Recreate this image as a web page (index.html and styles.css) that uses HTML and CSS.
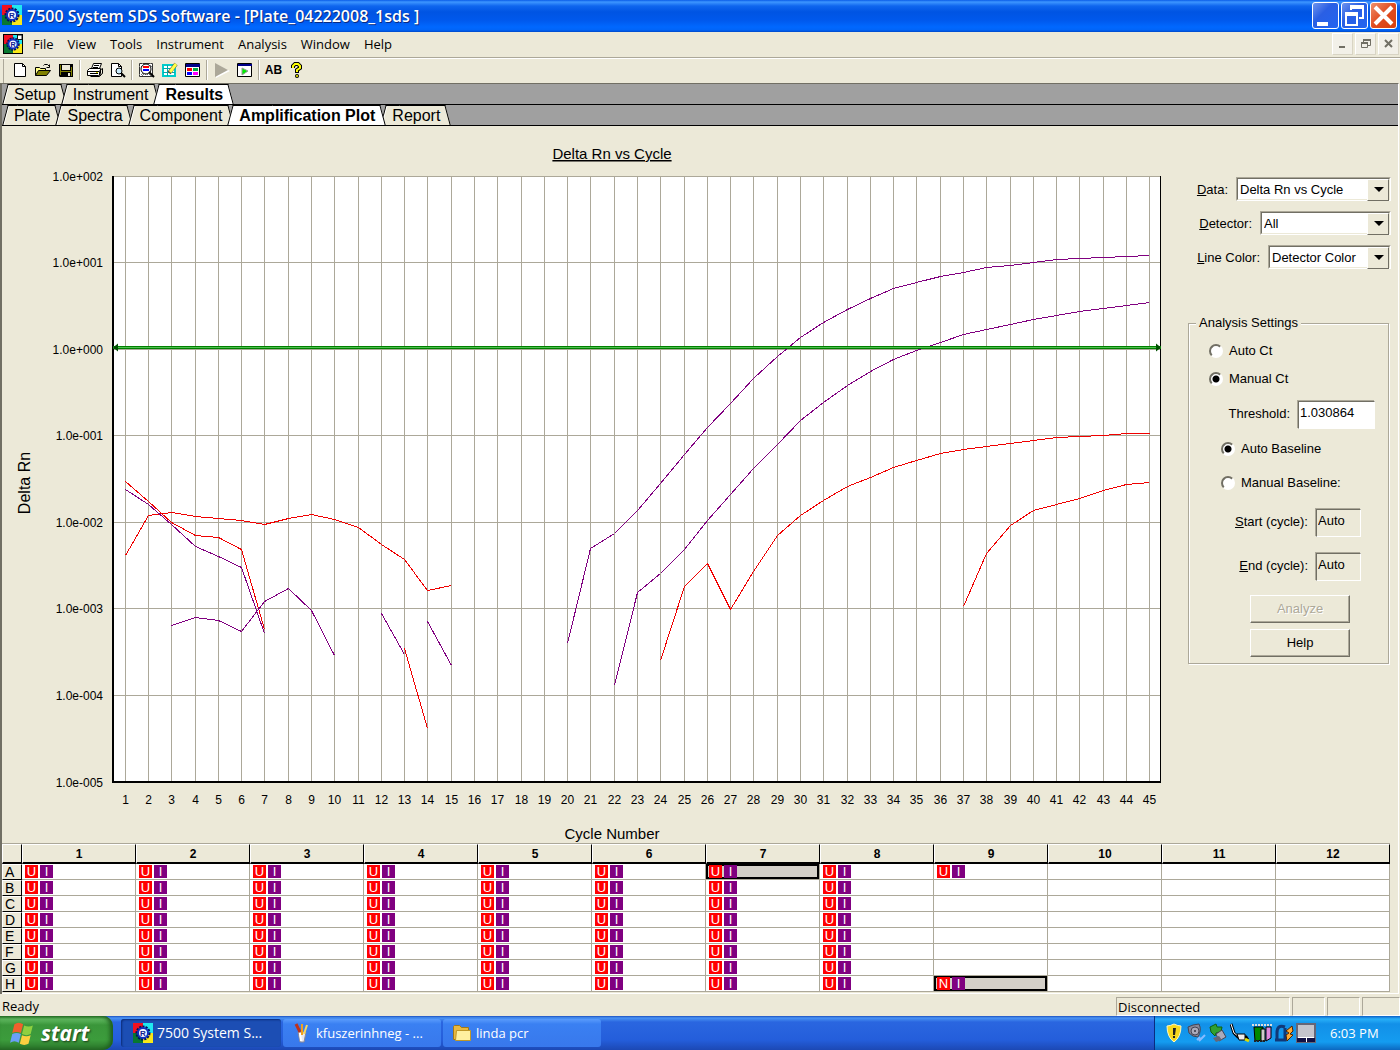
FILE: index.html
```html
<!DOCTYPE html>
<html lang="en">
<head>
<meta charset="utf-8">
<meta name="viewport" content="width=device-width, initial-scale=1">
<title>7500 System SDS Software - [Plate_04222008_1sds ]</title>
<link rel="stylesheet" href="styles.css">
</head>
<body>
<header class="titlebar">
  <svg class="icon20" viewBox="0 0 20 20" aria-hidden="true">
    <g id="logo">
      <path fill="#f01020" d="M0 0h10v10H0z"/><path fill="#20e8f0" d="M10 0h10v10H10z"/>
      <path fill="#087830" d="M0 10h10v10H0z"/><path fill="#f8e818" d="M10 10h10v10H10z"/>
      <circle cx="10" cy="10" r="6" fill="none" stroke="#001060" stroke-width="3" stroke-dasharray="2 1"/>
      <circle cx="10" cy="10" r="5" fill="#f4f8ff" stroke="#1030c0" stroke-width="2"/>
      <text x="10" y="13" text-anchor="middle" class="logo-r">R</text>
    </g>
  </svg>
  <h1>7500 System SDS Software - [Plate_04222008_1sds ]</h1>
  <div class="caption-buttons">
    <button type="button" aria-label="Minimize"><svg viewBox="0 0 25 25"><path fill="#fff" d="M4 19h11v4H4z"/></svg></button>
    <button type="button" aria-label="Restore"><svg viewBox="0 0 25 25"><path fill="none" stroke="#fff" stroke-width="2" d="M9 7V4h12v11h-4M4 12h11v10H4z"/><path stroke="#fff" stroke-width="4" d="M8 4h14M3 11h13"/></svg></button>
    <button type="button" class="close" aria-label="Close"><svg viewBox="0 0 25 25"><path stroke="#fff" stroke-width="4" d="M4 4l17 17M21 4L4 21"/></svg></button>
  </div>
</header>

<nav class="menubar">
  <svg class="icon20 doc" viewBox="0 0 20 20" aria-hidden="true"><use href="#logo"/><path fill="#fff" stroke="#000" d="M15 0v5h5V0z"/></svg>
  <button type="button">File</button><button type="button">View</button><button type="button">Tools</button><button type="button">Instrument</button><button type="button">Analysis</button><button type="button">Window</button><button type="button">Help</button>
  <div class="mdi-buttons">
    <button type="button" aria-label="Minimize document"><svg viewBox="0 0 20 20"><path fill="#716f64" d="M6 12h6v2H6z"/></svg></button>
    <button type="button" aria-label="Restore document"><svg viewBox="0 0 20 20"><path fill="none" stroke="#716f64" d="M7.500 8V6.500h7v5H12M5.500 9.500h6v4h-6z"/><path stroke="#716f64" stroke-width="2" d="M7 6h8M5 9h7"/></svg></button>
    <button type="button" aria-label="Close document"><svg viewBox="0 0 20 20"><path stroke="#716f64" stroke-width="2" d="M6 6l7 7M13 6l-7 7"/></svg></button>
  </div>
</nav>

<div class="toolbar">
  <button type="button" aria-label="New"><svg viewBox="0 0 16 16"><path fill="#fff" stroke="#000" d="M2.500 1.500h8l3 3v10h-11z"/><path fill="none" stroke="#000" d="M10.500 1.500v3h3"/></svg></button>
  <button type="button" aria-label="Open"><svg viewBox="0 0 16 16"><path fill="#ff8" stroke="#000" d="M.5 13.500v-8h4l1 1h5v2"/><path fill="#808000" stroke="#000" d="M.5 13.500l3-5h12l-4 5z"/><path fill="none" stroke="#000" d="M8.500 3.500l1-1h3l2 2m0-2v3h-3"/></svg></button>
  <button type="button" aria-label="Save"><svg viewBox="0 0 16 16"><path fill="#000" d="M1 2h14v13H2l-1-1z"/><path fill="#808000" d="M2 3h1v10H2zM13 5h1v9h-1zM3 9h10v1H3z"/><path fill="#ece9d8" d="M4 3h8v5H4zM10 11h2v3h-2z"/></svg></button>
  <span class="sep"></span>
  <button type="button" aria-label="Print"><svg viewBox="0 0 16 16"><path fill="#fff" stroke="#000" d="M4.500 6.500l2-5h8l-2 5M.5 8.500l2-2h11v5l-2 2H.5z"/><path fill="none" stroke="#000" d="M7 3.500h5M6 5.500h5M.5 9.500h12v4M12.500 8.500l3-2v5l-3 2M3 11.500h8M3.500 14.500h9l2-2"/><path fill="#dd0" d="M9 10h2v1H9z"/></svg></button>
  <button type="button" aria-label="Print preview"><svg viewBox="0 0 16 16"><path fill="#fff" stroke="#000" d="M1.500 1.500h7l3 3v10h-10z"/><path stroke="#000" fill="none" d="M8.500 1.500v3h3"/><circle cx="9" cy="9" r="3" fill="#cef" stroke="#000"/><path stroke="#000" stroke-width="2" d="M11 11l4 4"/></svg></button>
  <span class="sep"></span>
  <button type="button" aria-label="Zoom plate"><svg viewBox="0 0 16 16"><path fill="#fff" stroke="#333" d="M.5 1.500h13v13H.5z"/><path stroke="#777" stroke-dasharray="1 1" d="M0 4.500h14M0 12.500h14M3.500 1v14M11.500 1v14"/><circle cx="7" cy="7" r="5" fill="#fff" stroke="#000"/><path fill="#f00" d="M4 4h6v2H4z"/><path fill="#00f" d="M4 7h6v2H4z"/><path stroke="#000" stroke-width="2" d="M10 10l5 5"/></svg></button>
  <button type="button" aria-label="Edit well"><svg viewBox="0 0 16 16"><path fill="#fff" stroke="#0cc" stroke-width="2" d="M1 3h12v11H1z"/><path stroke="#0aa" d="M1 6.500h12M1 10.500h12M5.500 3v11"/><path stroke="#555" stroke-width="4" d="M7 11l7-9"/><path stroke="#ff4" stroke-width="3" d="M8 10l6-8"/></svg></button>
  <button type="button" aria-label="Plate view"><svg viewBox="0 0 16 16"><path fill="#fff" stroke="#000" d="M.5 1.500h14v13H.5z"/><path fill="#008" d="M1 2h14v3H1z"/><path fill="#f00" d="M2 6h5v3H2z"/><path fill="#00f" d="M2 10h5v3H2z"/><path fill="#0a4" d="M8 6h5v3H8z"/><path fill="#f0f" d="M8 10h5v3H8z"/></svg></button>
  <span class="sep"></span>
  <button type="button" aria-label="Run" disabled><svg viewBox="0 0 16 16"><path fill="#fff" d="M2 2v14l14-7z"/><path fill="#aca899" d="M1 1v14l13-7z"/></svg></button>
  <button type="button" aria-label="Analyze plate"><svg viewBox="0 0 16 16"><path fill="#fff" stroke="#000" d="M.5 1.500h14v13H.5z"/><path fill="#008" d="M1 2h14v2H1z"/><path fill="#0e0" stroke="#999" d="M5 6v7l6-4z"/></svg></button>
  <span class="sep"></span>
  <button type="button" class="ab" aria-label="Well labels">AB</button>
  <button type="button" aria-label="Help"><svg viewBox="0 0 16 16"><path fill="none" stroke="#000" stroke-width="4" d="M4 6V4l2-2h3l2 2v2L8 8v3"/><path fill="none" stroke="#ff0" stroke-width="2" d="M4 6V4l2-2h3l2 2v2L8 8v2"/><circle cx="8" cy="14" r="2" fill="#000"/><circle cx="8" cy="14" r="1" fill="#ff0"/></svg></button>
</div>

<main class="window">
  <div class="tabs" role="tablist">
    <button type="button" role="tab" class="tab">Setup</button><button type="button" role="tab" class="tab">Instrument</button><button type="button" role="tab" class="tab active" aria-selected="true">Results</button>
  </div>
  <div class="tabs" role="tablist">
    <button type="button" role="tab" class="tab">Plate</button><button type="button" role="tab" class="tab">Spectra</button><button type="button" role="tab" class="tab">Component</button><button type="button" role="tab" class="tab active" aria-selected="true">Amplification Plot</button><button type="button" role="tab" class="tab">Report</button>
  </div>

  <div class="content">
    <section class="chart"><svg id="plot" role="img" aria-label="Delta Rn vs Cycle"></svg></section>

    <form class="panel">
      <div class="combo-row"><label for="data"><u>D</u>ata:</label><span class="combo combo-l"><select id="data"><option>Delta Rn vs Cycle</option><option>Rn vs Cycle</option></select></span></div>
      <div class="combo-row"><label for="detector"><u>D</u>etector:</label><span class="combo combo-m"><select id="detector"><option>All</option></select></span></div>
      <div class="combo-row"><label for="color"><u>L</u>ine Color:</label><span class="combo combo-s"><select id="color"><option>Detector Color</option><option>Well Color</option></select></span></div>

      <fieldset>
        <legend>Analysis Settings</legend>
        <label class="radio"><input type="radio" name="ct">Auto Ct</label>
        <label class="radio"><input type="radio" name="ct" checked>Manual Ct</label>
        <div class="field threshold"><label for="threshold">Threshold:</label><input id="threshold" type="text" value="1.030864"></div>
        <label class="radio inner"><input type="radio" name="baseline" checked>Auto Baseline</label>
        <label class="radio inner"><input type="radio" name="baseline">Manual Baseline:</label>
        <div class="field cycle"><label for="start"><u>S</u>tart (cycle):</label><input id="start" type="text" value="Auto" readonly></div>
        <div class="field cycle"><label for="end"><u>E</u>nd (cycle):</label><input id="end" type="text" value="Auto" readonly></div>
        <div class="actions"><button type="button" disabled>Analyze</button><button type="button">Help</button></div>
      </fieldset>
    </form>
  </div>

  <div class="plate-wrap"><table class="plate" id="plate"></table></div>
</main>

<footer class="statusbar">
  <span class="ready">Ready</span>
  <span class="pane pane-main">Disconnected</span><span class="pane"></span><span class="pane"></span><span class="pane"></span>
</footer>

<nav class="taskbar">
  <button type="button" class="start">
    <svg viewBox="0 0 24 24"><path fill="#f0602c" d="M5 4q4-3 8 0l-2 8q-4-2-8 0z"/><path fill="#8fd040" d="M14 5q4 2 8 0l-2 8q-4 2-8 0z"/><path fill="#6aa0f8" d="M3 13q4-2 8 0l-2 8q-4-3-8 0z"/><path fill="#fcd040" d="M12 14q4 2 8 0l-2 8q-4 2-8 0z"/></svg>
    start</button>
  <div class="tasks">
    <button type="button" class="task current"><svg viewBox="0 0 20 20"><use href="#logo"/></svg>7500 System S...</button>
    <button type="button" class="task"><svg viewBox="0 0 20 20"><path fill="#e8e8f0" stroke="#889" d="M6 9h8l-2 10H8z"/><path stroke="#fff" stroke-width="2" d="M8 10l1 8"/><path stroke="#c03018" stroke-width="3" d="M8 9L4 1"/><path stroke="#f0a020" stroke-width="2" d="M10 12V1"/><path stroke="#f8d860" stroke-width="2" d="M12 11l3-9"/></svg>kfuszerinhneg - ...</button>
    <button type="button" class="task"><svg viewBox="0 0 20 20"><path fill="#e8b840" stroke="#a07818" d="M1.500 3.500l1-1h5l2 2h7v12h-15z"/><path fill="#fff0a0" stroke="#c09828" d="M4.500 7.500h14v10h-15z"/></svg>linda pcr</button>
  </div>
  <div class="tray">
    <svg viewBox="0 0 20 20"><path fill="#f8d820" stroke="#fff8c0" d="M10 1q4 2 7 2 0 11-7 16Q3 14 3 3q3 0 7-2z"/><path fill="#222" d="M9 5h3l-1 7H9zM9 13h2v2H9z"/></svg>
    <svg viewBox="0 0 20 20"><path fill="#889" stroke="#445" d="M2 4l5-2 6-1q3 6-1 13l-5-1-4-3z"/><circle cx="9" cy="8" r="4" fill="#aab" stroke="#445"/><circle cx="9" cy="8" r="1" fill="#334"/><path fill="none" stroke="#8bf" stroke-width="2" d="M13 18l6-6M11 17l3-3"/></svg>
    <svg viewBox="0 0 20 20"><path fill="#30a030" stroke="#106010" d="M2 4l6-3 1 3h5l-1 5-5 1-1 3-4-4z"/><path fill="#aab" stroke="#445" d="M8 11l6-4 4 7-7 4z"/><path fill="#667" d="M5 15l6-2 3 4-6 2z"/></svg>
    <svg viewBox="0 0 20 20"><path fill="none" stroke="#000" stroke-width="3" d="M1 1l3 9 4 4h8l2 3"/><path fill="none" stroke="#fff" d="M1 1l3 9 4 3h6"/><path fill="#eee" stroke="#000" d="M7 11h8v6H9z"/><path stroke="#dd0" stroke-width="3" d="M15 16l4 2"/></svg>
    <svg viewBox="0 0 20 20"><path stroke="#ddd" stroke-width="2" stroke-dasharray="2 1" d="M0 2h20"/><path fill="#080" stroke="#000" d="M2 4h9v13l-8 1z"/><path fill="#ccc" stroke="#000" d="M9 6h4v12H9z"/><path fill="#d8d" stroke="#000" d="M14 4h5v11l-5 3z"/><path stroke="#222" stroke-width="2" stroke-dasharray="2 1" d="M2 18h12"/></svg>
    <svg viewBox="0 0 20 20"><path fill="none" stroke="#103878" stroke-width="3" d="M11 4Q3 1 3 10v7h8V5M1 17h10"/><path fill="#fa3" stroke="#502000" d="M18 3l-6 5 3 2-3 2 1 6 6-6-3-1 3-3z"/></svg>
    <svg viewBox="0 0 20 20"><path fill="#c4c4cc" stroke="#667" stroke-width="2" d="M1 1h18v18H1z"/><path fill="#114" d="M1 15h18v4H1z"/><path fill="#fff" d="M2 14h16v1H2zM10 15h1v4h-1z"/></svg>
    <time>6:03 PM</time>
  </div>
</nav>
<script src="script.js"></script>
</body>
</html>
```
FILE: styles.css
```css
* { box-sizing: border-box; }
body {
  margin: 0;
  min-height: 100vh;
  display: flex;
  flex-direction: column;
  background: #ece9d8;
  color: #000;
  font: 13px/16px "Liberation Sans", Arial, sans-serif;
}
button, input, select { font: inherit; color: inherit; margin: 0; padding: 0; border: 0; border-radius: 0; background: none; }
.icon20 { width: 20px; height: 20px; overflow: visible; }
.logo-r { font: bold 8px "Liberation Sans", sans-serif; fill: #102090; }

.titlebar {
  height: 32px;
  display: flex;
  align-items: center;
  gap: 5px;
  padding: 0 3px 2px 2px;
  background: linear-gradient(#0a5ce8 0, #3d96ff 2px, #0f66ee 6px, #0054e3 12px, #0058ec 20px, #0068ff 27px, #0064f8 30px, #0048c8 32px);
  color: #fff;
}
.titlebar h1 { flex: 1; margin: 0; padding-top: 2px; font: 600 16px/20px "Open Sans", sans-serif; text-shadow: 1px 1px 0 #0a2a80; white-space: nowrap; }
.caption-buttons { display: flex; gap: 2px; }
.caption-buttons button {
  width: 27px;
  height: 27px;
  border: 1px solid #fff;
  border-radius: 3px;
  background: linear-gradient(135deg, #6e94ee, #2a5fe4 40%, #2264f0);
}
.caption-buttons .close { background: linear-gradient(135deg, #f0906c, #e04c20 50%, #d84010); }
.caption-buttons svg { display: block; width: 25px; height: 25px; }

.menubar {
  height: 26px;
  display: flex;
  align-items: center;
  padding: 0 1px 2px 3px;
  border-bottom: 1px solid #aca899;
  font: 13px/20px "Open Sans", sans-serif;
}
.doc { margin-right: 3px; background: #fff; border: 1px solid #000; }
.menubar > button { padding: 0 7px; }
.mdi-buttons { display: flex; gap: 2px; margin-left: auto; }
.mdi-buttons button { width: 21px; height: 22px; border: 1px solid #fff; border-right-color: #d8d4c4; border-bottom-color: #d8d4c4; background: #f2f0e8; }
.mdi-buttons svg { display: block; width: 20px; height: 20px; }

.toolbar { height: 25px; display: flex; align-items: center; padding: 0 0 2px 8px; border-top: 1px solid #fff; box-shadow: inset 3px 0 0 #ece9d8, inset 4px 0 0 #aca899; }
.toolbar button { width: 23px; height: 22px; display: grid; place-items: center; }
.toolbar svg { width: 16px; height: 16px; }
.toolbar .ab { font: bold 12px/16px "Liberation Sans", sans-serif; }
.sep { width: 2px; height: 20px; margin: 0 2px; background: linear-gradient(90deg, #aca899 50%, #fff 50%); }

.window { flex: 1; display: flex; flex-direction: column; margin-right: 1px; border-left: 2px solid #716f64; border-right: 1px solid #fff; border-top: 1px solid #716f64; }
.tabs { height: 21px; display: flex; padding-left: 1px; background: #a0a0a0; border-bottom: 1px solid #000; }
.tab {
  position: relative;
  z-index: 0;
  height: 20px;
  margin-right: -4px;
  padding: 0 10px 0 11px;
  font-size: 16px;
  line-height: 22px;
  white-space: nowrap;
}
.tab::before, .tab::after {
  content: "";
  position: absolute;
  z-index: -1;
  top: 0;
  bottom: 0;
  background: #ece9d8;
  border-top: 1px solid #000;
}
.tab::before { left: 2px; right: 50%; border-left: 1px solid #000; box-shadow: inset 1px 0 0 #fff; transform: skewX(-15deg); }
.tab::after { left: 30%; right: 2px; border-right: 1px solid #000; transform: skewX(15deg); }
.tab.active { z-index: 1; font-weight: bold; }
.tab.active::before, .tab.active::after { background: #fff; }

.content { flex: 1; display: flex; min-height: 560px; }
.chart { flex: 1; min-width: 0; position: relative; }
.chart svg { position: absolute; inset: 0; width: 100%; height: 100%; }
.chart .grid { stroke: #aca899; shape-rendering: crispEdges; }
.chart .series { fill: none; shape-rendering: crispEdges; }
.chart .tick { font-size: 12px; }
.chart .title { font-size: 15px; text-decoration: underline; }
.chart .axis { font-size: 15px; }
.chart .axis-y { font-size: 16px; }

.panel { width: 212px; padding: 51px 7px 20px 0; }
.combo-row { display: flex; justify-content: flex-end; align-items: center; gap: 8px; height: 24px; margin-bottom: 10px; }
.combo-row label { padding-top: 1px; }
.combo { position: relative; height: 24px; border: 1px solid; border-color: #aca899 #fff #fff #aca899; }
.combo-l { width: 155px; }
.combo-m { width: 131px; }
.combo-s { width: 123px; }
.combo select { appearance: none; display: block; width: 100%; height: 22px; padding: 1px 22px 0 2px; border: 1px solid; border-color: #716f64 #ece9d8 #ece9d8 #716f64; background: #fff; }
.combo::before { content: ""; position: absolute; top: 1px; right: 1px; width: 20px; height: 20px; background: #ece9d8; border: 1px solid; border-color: #fff #716f64 #716f64 #fff; pointer-events: none; }
.combo::after { content: ""; position: absolute; top: 9px; right: 6px; border: 5px solid transparent; border-top-color: #000; border-bottom: 0; pointer-events: none; }

fieldset { margin: 46px 2px 0 2px; padding: 6px 13px 6px 20px; border: 1px solid #aca899; box-shadow: 1px 1px 0 #fff, inset 1px 1px 0 #fff; min-width: 0; }
legend { margin-left: -13px; padding: 0 3px; background: #ece9d8; }
.radio { display: flex; align-items: center; gap: 6px; height: 28px; }
.radio.inner { margin-left: 12px; height: 34px; }
.radio input { appearance: none; width: 14px; height: 14px; border-radius: 50%; border: 2px solid; border-color: #716f64 #fff #fff #716f64; background: #fff; }
.radio input:checked { background: radial-gradient(circle, #000 3px, #fff 4px); }
.field { display: flex; justify-content: flex-end; align-items: center; gap: 8px; }
.field label { padding-bottom: 2px; }
.field input { height: 28px; padding: 0 1px 5px; border: 1px solid; border-color: #716f64 #fff #fff #716f64; box-shadow: -1px -1px 0 #aca899; }
.threshold { height: 28px; margin: 8px 0 3px; }
.threshold input { width: 77px; background: #fff; }
.cycle { height: 28px; margin: 9px 14px 16px 0; }
.cycle input { width: 45px; }
.actions { display: grid; gap: 6px; width: 100px; margin: -2px 0 0 41px; }
.actions button { height: 28px; border: 1px solid; border-color: #fff #716f64 #716f64 #fff; box-shadow: inset -1px -1px 0 #aca899; }
.actions button:disabled { color: #aca899; text-shadow: 1px 1px 0 #fff; }

.plate-wrap { padding: 0 8px 1px 0; border-bottom: 1px solid #fff; }
.plate { width: 100%; table-layout: fixed; border-collapse: separate; border-spacing: 0; border-top: 1px solid #aca899; }
.plate th, .plate td { height: 16px; padding: 0; overflow: hidden; }
.plate .corner { width: 20px; }
.plate thead th { height: 20px; border: 1px solid; border-color: #fff #000 #000 #fff; border-bottom-width: 2px; font: bold 12px/16px "Liberation Sans", sans-serif; }
.plate tbody th { padding-left: 2px; border: 1px solid; border-color: #fff #000 #000 #fff; font: 14px/14px "Liberation Sans", sans-serif; text-align: left; }
.plate td { background: #fff; border-right: 1px solid #aca899; border-bottom: 1px solid #aca899; }
.plate td.selected { background: #d4d0c8; box-shadow: inset 0 0 0 2px #000; }
.chips { display: flex; gap: 2px; padding-left: 3px; color: #fff; font: 13px/13px "Liberation Sans", sans-serif; text-align: center; }
.chips span { width: 13px; height: 13px; background: #800080; }
.chips span:first-child { background: #f00; }

.statusbar { height: 22px; display: flex; gap: 2px; padding: 3px 0 0 2px; font: 13px/18px "Open Sans", sans-serif; }
.ready { flex: 1; }
.pane { width: 33px; border: 1px solid; border-color: #aca899 #fff #fff #aca899; }
.pane:last-child { width: 38px; }
.pane-main { width: 174px; padding-left: 1px; }

.taskbar {
  height: 34px;
  display: flex;
  background: linear-gradient(#1c50c0 0, #4a94f4 2px, #2a66e0 6px, #245edb 24px, #1c48b4 34px);
  color: #fff;
  font: 13px/20px "Open Sans", sans-serif;
}
.start {
  width: 113px;
  display: flex;
  align-items: center;
  gap: 6px;
  padding-left: 9px;
  border-radius: 0 10px 10px 0;
  background: linear-gradient(#2c7c2c 0, #60b860 3px, #3a963a 9px, #3c9c3c 24px, #287028 34px);
  box-shadow: inset -3px 0 4px #1e5c1e;
  font: italic bold 21px/24px "Open Sans", sans-serif;
  text-shadow: 1px 1px 2px #1a3c1a;
}
.start svg { width: 26px; height: 26px; }
.tasks { flex: 1; display: flex; gap: 2px; padding: 3px 0 3px 8px; }
.task { width: 158px; display: flex; align-items: center; gap: 4px; padding-left: 9px; border-radius: 3px; background: linear-gradient(#5a9cfc, #3a80f2 5px, #3878ec); white-space: nowrap; }
.task.current { width: 160px; padding-left: 12px; background: #1c4eb4; box-shadow: inset 1px 1px 2px #0c2c78; font-size: 14px; }
.task svg { width: 20px; height: 20px; overflow: visible; }
.tray { width: 246px; display: flex; align-items: center; gap: 2px; padding-left: 9px; border-left: 1px solid #0a2c80; background: linear-gradient(#0c60c8 0, #28b0f8 3px, #1290e8 8px, #149cf0 26px, #0c68c0 34px); }
.tray svg { width: 20px; height: 20px; }
.tray time { margin-left: 12px; white-space: nowrap; }
```
FILE: script.js
```js
// Delta Rn readings: colour, first cycle, then log10(Delta Rn) for each cycle in turn.
const PURPLE = '#800080', RED = '#f00000';
const series = [
  [PURPLE, 20, [-3.40,-2.30,-2.13,-1.86,-1.55,-1.22,-0.91,-0.63,-0.34,-0.09,0.13,0.31,0.46,0.59,0.70,0.77,0.84,0.89,0.94,0.97,1.005,1.03,1.05,1.06,1.07,1.085]],
  [PURPLE, 22, [-3.885,-2.815,-2.59,-2.31,-1.98,-1.675,-1.38,-1.10,-0.83,-0.617,-0.42,-0.254,-0.124,-0.016,0.08,0.165,0.23,0.29,0.346,0.393,0.44,0.47,0.504,0.538]],
  [RED, 24, [-3.597,-2.738,-2.48,-3.011,-2.565,-2.15,-1.926,-1.744,-1.587,-1.479,-1.371,-1.287,-1.20,-1.155,-1.12,-1.086,-1.051,-1.017,-1.005,-0.993,-0.98,-0.98]],
  [RED, 37, [-2.973,-2.357,-2.033,-1.868,-1.80,-1.721,-1.629,-1.559,-1.536]],
  [RED, 1, [-2.38,-1.917,-1.887,-1.929,-1.952,-1.975,-2.02,-1.952,-1.906,-1.964,-2.056,-2.257,-2.426,-2.784,-2.726]],
  [RED, 1, [-1.525,-1.756,-1.998,-2.148,-2.172,-2.31,-3.242]],
  [PURPLE, 1, [-1.617,-1.80,-2.021,-2.276,-2.391,-2.526,-3.28]],
  [PURPLE, 3, [-3.193,-3.096,-3.13,-3.257,-2.911,-2.765,-3.015,-3.535]],
  [PURPLE, 12, [-3.05,-3.528]],
  [RED, 13, [-3.454,-4.382]],
  [PURPLE, 14, [-3.142,-3.65]]
];
const threshold = Math.log10(1.030864);

function drawPlot() {
  const svg = document.getElementById('plot');
  const { width, height } = svg.parentElement.getBoundingClientRect();
  const left = 111, top = 50, right = Math.round(width) - 25, bottom = Math.round(height) - 61;
  const x = c => Math.round(left + (c - 0.5) * (right - left) / 45) + 0.5;
  const y = v => Math.floor(top + (2 - v) * (bottom - top) / 7) + 0.5;
  let s = `<rect x="${left}" y="${top}" width="${right - left}" height="${bottom - top}" fill="#fff"/>`;
  for (let c = 1; c <= 45; c++) {
    s += `<path class="grid" d="M${x(c)} ${top}V${bottom}"/>`;
    s += `<text class="tick" text-anchor="middle" x="${x(c)}" y="${bottom + 22}">${c}</text>`;
  }
  for (let e = 2; e >= -5; e--) {
    s += `<path class="grid" d="M${left} ${y(e)}H${right}"/>`;
    s += `<text class="tick" text-anchor="end" x="${left - 10}" y="${Math.round(y(e)) + 4}">1.0e${e < 0 ? '-' : '+'}00${Math.abs(e)}</text>`;
  }
  for (const [color, first, values] of series) {
    const pts = values.map((v, i) => `${x(first + i)},${y(v)}`).join(' ');
    s += `<polyline class="series" stroke="${color}" points="${pts}"/>`;
  }
  s += `<path d="M${left} ${top}V${bottom}H${right}" fill="none" stroke="#000" stroke-width="2"/>`;
  s += `<path d="M${right - 0.5} ${top}V${bottom}" stroke="#000"/>`;
  const t = y(threshold);
  s += `<path d="M${left} ${t}H${right}" stroke="#008000" stroke-width="3"/><path d="M${left} ${t}H${right}" stroke="#50c050"/>`;
  s += `<path d="M${left} ${t}l5-4v8zM${right} ${t}l-5-4v8z" fill="#005000"/>`;
  const mid = (left + right) / 2 - 25;
  s += `<text class="title" text-anchor="middle" x="${mid}" y="33">Delta Rn vs Cycle</text>`;
  s += `<text class="axis" text-anchor="middle" x="${mid}" y="${bottom + 57}">Cycle Number</text>`;
  s += `<text class="axis-y" text-anchor="middle" transform="translate(28 ${(top + bottom) / 2 + 4}) rotate(-90)">Delta Rn</text>`;
  svg.innerHTML = s;
}

// Plate layout: columns 1-8 are filled; column 9 holds a sample in A and a control in H.
function wellTask(row, col) {
  if (col <= 8 || (col === 9 && row === 'A')) return 'U';
  return col === 9 && row === 'H' ? 'N' : '';
}

function buildPlate() {
  const cols = Array.from({ length: 12 }, (_, i) => i + 1);
  const selected = ['A7', 'H9'];
  let html = '<thead><tr><th class="corner"></th>' + cols.map(c => `<th scope="col">${c}</th>`).join('') + '</tr></thead><tbody>';
  for (const row of 'ABCDEFGH') {
    html += `<tr><th scope="row">${row}</th>`;
    for (const c of cols) {
      const task = wellTask(row, c);
      const cls = selected.includes(row + c) ? ' class="selected"' : '';
      html += `<td${cls}>${task ? `<div class="chips"><span>${task}</span><span>I</span></div>` : ''}</td>`;
    }
    html += '</tr>';
  }
  document.getElementById('plate').innerHTML = html + '</tbody>';
}

buildPlate();
drawPlot();
window.addEventListener('resize', drawPlot);
```
